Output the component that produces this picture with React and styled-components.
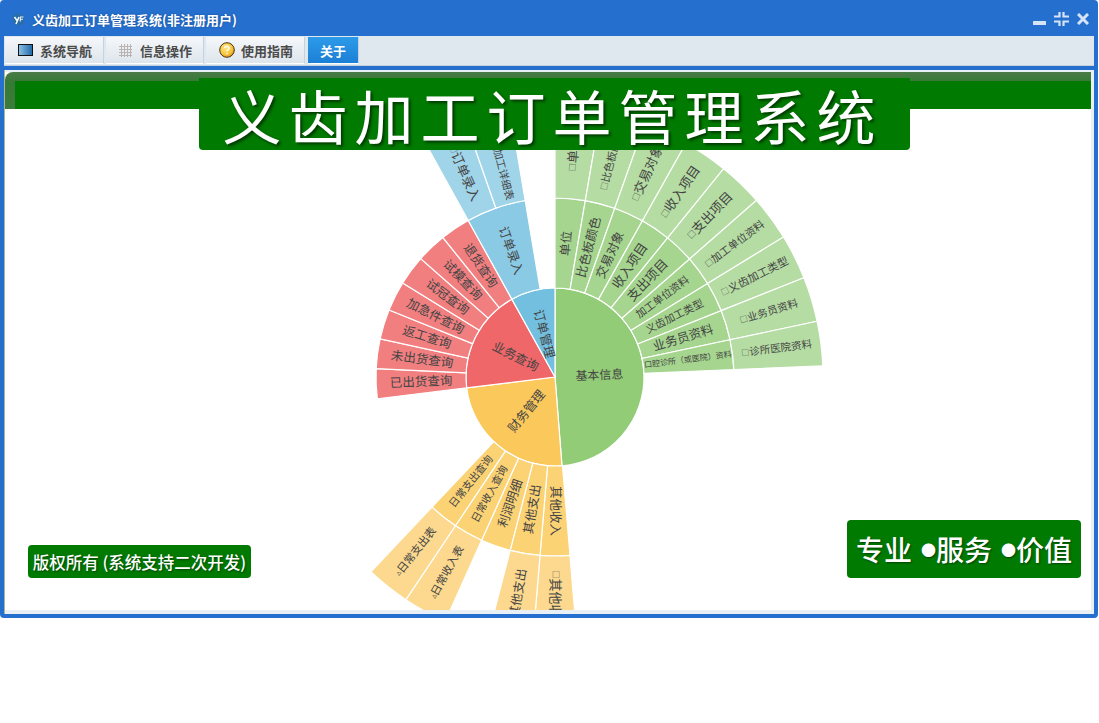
import React from "react";
import styled, { createGlobalStyle } from "styled-components";

const FONT = `"Noto Sans CJK SC", "Noto Sans", sans-serif`;

const GlobalStyle = createGlobalStyle`
  html, body {
    margin: 0;
    background: #fff;
    font-family: ${FONT};
  }
`;

const Window = styled.div`
  box-sizing: border-box;
  width: 1098px;
  height: 618px;
  border: 4px solid #256fce;
  border-radius: 4px;
  display: flex;
  flex-direction: column;
  background: #256fce;
`;

const TitleBar = styled.div`
  box-sizing: border-box;
  height: 32px;
  flex: none;
  display: flex;
  align-items: center;
  padding: 0 5px 2px 8px;
`;

const Title = styled.div`
  margin-left: 7px;
  flex: 1;
  color: #fff;
  font-size: 13px;
  font-weight: 700;
  text-shadow: 0 0 2px #174a8e;
`;

const Controls = styled.div`
  display: flex;
  align-items: center;
  gap: 8px;
`;

const TabBar = styled.div`
  height: 30px;
  flex: none;
  box-sizing: border-box;
  display: flex;
  gap: 2px;
  padding: 1px 0 1px 1px;
  background: #dfe8ef;
  border-bottom: 1px solid #c3d2df;
`;

const Tab = styled.div`
  display: flex;
  align-items: center;
  gap: ${(p) => (p.$gap ? p.$gap : 7)}px;
  padding: 0 ${(p) => (p.$active ? 12 : 11)}px 0 ${(p) => (p.$active ? 12 : 13)}px;
  box-sizing: border-box;
  font-size: 13px;
  font-weight: 700;
  color: ${(p) => (p.$active ? "#fff" : "#4a4a4a")};
  background: ${(p) =>
    p.$active
      ? "linear-gradient(#2d9be9, #1c7fd6)"
      : "linear-gradient(#f5f7fa, #dde5ec)"};
  border-right: 1px solid #c5d3df;
  border-bottom: 1px solid #fff;
  margin-left: ${(p) => (p.$active ? 1 : 0)}px;
`;

const Rule = styled.div`
  height: 4px;
  flex: none;
`;

const Body = styled.div`
  flex: 1;
  min-height: 0;
  display: flex;
  padding: 2px 3px 4px 0;
  border-left: 1px solid #a9b98f;
  background: #e8f0f6;
`;

const Panel = styled.div`
  position: relative;
  flex: 1;
  min-width: 0;
  display: flex;
  flex-direction: column;
  overflow: hidden;
  background: #fff;
`;

const PanelHead = styled.div`
  height: 37px;
  flex: none;
  box-sizing: border-box;
  padding: 9px 0 0 10px;
  background: linear-gradient(#4a7a48, #347a34 30%, #3f7a3f);
  border-top-left-radius: 8px;
`;

const HeadFill = styled.div`
  height: 100%;
  background: #007a00;
`;

const Banner = styled.div`
  position: absolute;
  left: 194px;
  top: 6px;
  width: 711px;
  height: 72px;
  border-radius: 0 0 4px 4px;
  background: #007a00;
  color: #fff;
  display: flex;
  align-items: center;
  justify-content: center;
  box-sizing: border-box;
  padding-right: 4px;
  font-size: 59px;
  letter-spacing: 7px;
  white-space: nowrap;
  text-shadow: 2px 2px 3px rgba(0, 0, 0, 0.55);
`;

const Badge = styled.div`
  position: absolute;
  bottom: 32px;
  box-sizing: border-box;
  display: flex;
  align-items: center;
  justify-content: center;
  border-radius: 4px;
  background: #007a00;
  color: #fff;
  white-space: pre;
  text-shadow: 1px 1px 2px rgba(0, 0, 0, 0.45);
`;

const CopyBadge = styled(Badge)`
  left: 23px;
  width: 223px;
  height: 33px;
  font-size: 16.5px;
  font-weight: 500;
`;

const SloganBadge = styled(Badge)`
  right: 10px;
  width: 234px;
  height: 58px;
  font-size: 28px;
  font-weight: 500;
`;

const Dot = styled.span`
  font-size: 15px;
  margin-left: 9px;
`;

const Chart = styled.svg`
  display: block;
  width: 1086px;
  height: 501px;
  flex: none;
`;

const Sector = styled.path`
  stroke: #fff;
  stroke-width: 1.2;
`;

const Label = styled.text`
  font-family: ${FONT};
  fill: #444;
  dominant-baseline: central;
  text-anchor: middle;
`;

const CX = 555;
const CY = 377;
const RINGS = [
  [0, 89],
  [89, 179],
  [179, 268],
];

const polar = (a, r) => {
  const t = (a * Math.PI) / 180;
  return [CX + r * Math.sin(t), CY - r * Math.cos(t)];
};

const sectorPath = (a0, a1, r0, r1) => {
  const [x0, y0] = polar(a0, r1);
  const [x1, y1] = polar(a1, r1);
  const large = a1 - a0 > 180 ? 1 : 0;
  if (r0 === 0) {
    return `M${CX} ${CY}L${x0} ${y0}A${r1} ${r1} 0 ${large} 1 ${x1} ${y1}Z`;
  }
  const [x2, y2] = polar(a1, r0);
  const [x3, y3] = polar(a0, r0);
  return `M${x0} ${y0}A${r1} ${r1} 0 ${large} 1 ${x1} ${y1}L${x2} ${y2}A${r0} ${r0} 0 ${large} 0 ${x3} ${y3}Z`;
};

const COLORS = {
  green: ["#92cc76", "#a5d58e", "#b5dca3"],
  orange: ["#fbc85c", "#fbd274", "#fcd98e"],
  red: ["#f06769", "#f17f80", "#f29092"],
  blue: ["#73bfdf", "#8acae4", "#a0d4e9"],
};

const SEGMENTS = [
  // inner ring
  ["green", 0, 0, 175.5, "基本信息", 12],
  ["orange", 0, 175.5, 263, "财务管理", 12.5],
  ["red", 0, 263, 331, "业务查询", 12.5],
  ["blue", 0, 331, 360, "订单管理", 12.5],
  // second ring
  ["green", 1, 0, 9.75, "单位", 12.5],
  ["green", 1, 9.75, 19.5, "比色板颜色", 12.5],
  ["green", 1, 19.5, 29.25, "交易对象", 12.5],
  ["green", 1, 29.25, 39, "收入项目", 13],
  ["green", 1, 39, 48.75, "支出项目", 13],
  ["green", 1, 48.75, 58.5, "加工单位资料", 10.5],
  ["green", 1, 58.5, 68.25, "义齿加工类型", 10.5],
  ["green", 1, 68.25, 78, "业务员资料", 12.5],
  ["green", 1, 78, 87.6, "口腔诊所（或医院）资料", 8],
  ["orange", 1, 175.2, 184.8, "其他收入", 12.5],
  ["orange", 1, 184.8, 194.5, "其他支出", 12.5],
  ["orange", 1, 194.5, 204.2, "利润明细", 12.5],
  ["orange", 1, 204.2, 213.8, "日常收入查询", 10.5],
  ["orange", 1, 213.8, 223.4, "日常支出查询", 10.5],
  ["red", 1, 263, 272.7, "已出货查询", 12.5],
  ["red", 1, 272.7, 282.3, "未出货查询", 12.5],
  ["red", 1, 282.3, 292, "返工查询", 12.5],
  ["red", 1, 292, 301.7, "加急件查询", 12.5],
  ["red", 1, 301.7, 311.4, "试冠查询", 12.5],
  ["red", 1, 311.4, 321.2, "试模查询", 12.5],
  ["red", 1, 321.2, 331, "退货查询", 12.5],
  ["blue", 1, 331, 350.4, "订单录入", 12.5],
  // outer ring
  ["green", 2, 0, 9.75, "单位", 13, "□"],
  ["green", 2, 9.75, 19.5, "比色板颜色", 10.5, "□"],
  ["green", 2, 19.5, 29.25, "交易对象", 13, "□"],
  ["green", 2, 29.25, 39, "收入项目", 13, "□"],
  ["green", 2, 39, 48.75, "支出项目", 13, "□"],
  ["green", 2, 48.75, 58.5, "加工单位资料", 10.5, "□"],
  ["green", 2, 58.5, 68.25, "义齿加工类型", 11, "□"],
  ["green", 2, 68.25, 78, "业务员资料", 10.5, "□"],
  ["green", 2, 78, 87.6, "诊所医院资料", 10.5, "□"],
  ["orange", 2, 175.2, 184.8, "其他收入", 13, "□"],
  ["orange", 2, 184.8, 194.5, "其他支出", 12.5, "□"],
  ["orange", 2, 204.2, 213.8, "日常收入表", 11, "▵"],
  ["orange", 2, 213.8, 223.4, "日常支出表", 11, "▵"],
  ["blue", 2, 331, 340.7, "订单录入", 13, "□"],
  ["blue", 2, 340.7, 350.4, "义齿加工详细表", 10.5, "□"],
];

const Sunburst = () => (
  <Chart viewBox="5 109 1086 501">
    {SEGMENTS.map(([group, ring, a0, a1]) => (
      <Sector
        key={`${group}-${ring}-${a0}`}
        d={sectorPath(a0, a1, RINGS[ring][0], RINGS[ring][1])}
        fill={COLORS[group][ring]}
      />
    ))}
    {SEGMENTS.map(([group, ring, a0, a1, text, size, mark]) => {
      const mid = (a0 + a1) / 2;
      const [x, y] = polar(mid, (RINGS[ring][0] + RINGS[ring][1]) / 2);
      const rot = mid > 180 ? mid - 270 : mid - 90;
      return (
        <Label
          key={`${group}-${ring}-${a0}-t`}
          x={x}
          y={y - 1.5}
          fontSize={size}
          transform={`rotate(${rot} ${x} ${y})`}
        >
          {mark && <tspan fontSize={8}>{mark}</tspan>}
          {text}
        </Label>
      );
    })}
  </Chart>
);

const AppIcon = () => (
  <svg width="13" height="13" viewBox="0 0 13 13">
    <circle cx="6.5" cy="6.5" r="6" fill="#2a6ea8" />
    <path d="M2.5 4 L5 7.5 M7 4 L4 11" stroke="#fff" strokeWidth="1.5" fill="none" />
    <path d="M8 4 H11.5 M8.3 4 V8.5 M8.3 6.2 H11" stroke="#e8f0f8" strokeWidth="1.1" fill="none" />
  </svg>
);

const WindowButtons = () => (
  <Controls>
    <svg width="13" height="14" viewBox="0 0 13 14">
      <rect x="0" y="9" width="13" height="4" rx="0.5" fill="#d6e4f7" />
    </svg>
    <svg width="15" height="14" viewBox="0 0 15 14" fill="none" stroke="#d6e4f7" strokeWidth="2.2">
      <path d="M0 4.5 H5.5 V0 M9.5 0 V4.5 H15 M0 9.5 H5.5 V14 M9.5 14 V9.5 H15" />
    </svg>
    <svg width="12" height="12" viewBox="0 0 12 12" stroke="#d6e4f7" strokeWidth="3">
      <path d="M1 1 L11 11 M11 1 L1 11" />
    </svg>
  </Controls>
);

const MonitorIcon = () => (
  <svg width="15" height="12" viewBox="0 0 15 12">
    <defs>
      <linearGradient id="screen" x1="0" x2="1" y1="0" y2="0">
        <stop offset="0" stopColor="#8cc3e6" />
        <stop offset="1" stopColor="#1f68a6" />
      </linearGradient>
    </defs>
    <rect x="0.5" y="0.5" width="14" height="11" fill="url(#screen)" stroke="#111" />
  </svg>
);

const GridIcon = () => (
  <svg width="13" height="13" viewBox="0 0 13 13" stroke="#9a8f8a" strokeWidth="1" opacity="0.6">
    <path d="M2.5 0V13M5.5 0V13M8.5 0V13M11.5 0V13M0 2.5H13M0 5.5H13M0 8.5H13M0 11.5H13" />
  </svg>
);

const HelpIcon = () => (
  <svg width="16" height="16" viewBox="0 0 16 16">
    <defs>
      <radialGradient id="coin" cx="0.4" cy="0.35" r="0.7">
        <stop offset="0" stopColor="#ffe98a" />
        <stop offset="0.7" stopColor="#f6c136" />
        <stop offset="1" stopColor="#de8418" />
      </radialGradient>
    </defs>
    <circle cx="8" cy="8" r="7.3" fill="url(#coin)" stroke="#4a3416" strokeWidth="1" />
    <path d="M5.8 6 C6 3.8 10.4 3.8 10.2 6.2 C10 7.8 8 7.6 8 9.6 M8 11 V12.2" fill="none" stroke="#fffbe6" strokeWidth="1.6" />
  </svg>
);

export default function App() {
  return (
    <>
      <GlobalStyle />
      <Window>
        <TitleBar>
          <AppIcon />
          <Title>义齿加工订单管理系统(非注册用户)</Title>
          <WindowButtons />
        </TitleBar>
        <TabBar>
          <Tab>
            <MonitorIcon />
            系统导航
          </Tab>
          <Tab $gap={8}>
            <GridIcon />
            信息操作
          </Tab>
          <Tab $gap={6}>
            <HelpIcon />
            使用指南
          </Tab>
          <Tab $active>关于</Tab>
        </TabBar>
        <Rule />
        <Body>
          <Panel>
            <PanelHead>
              <HeadFill />
            </PanelHead>
            <Sunburst />
            <Banner>义齿加工订单管理系统</Banner>
            <CopyBadge>版权所有 (系统支持二次开发)</CopyBadge>
            <SloganBadge>
              专业<Dot>●</Dot>服务<Dot>●</Dot>价值
            </SloganBadge>
          </Panel>
        </Body>
      </Window>
    </>
  );
}
